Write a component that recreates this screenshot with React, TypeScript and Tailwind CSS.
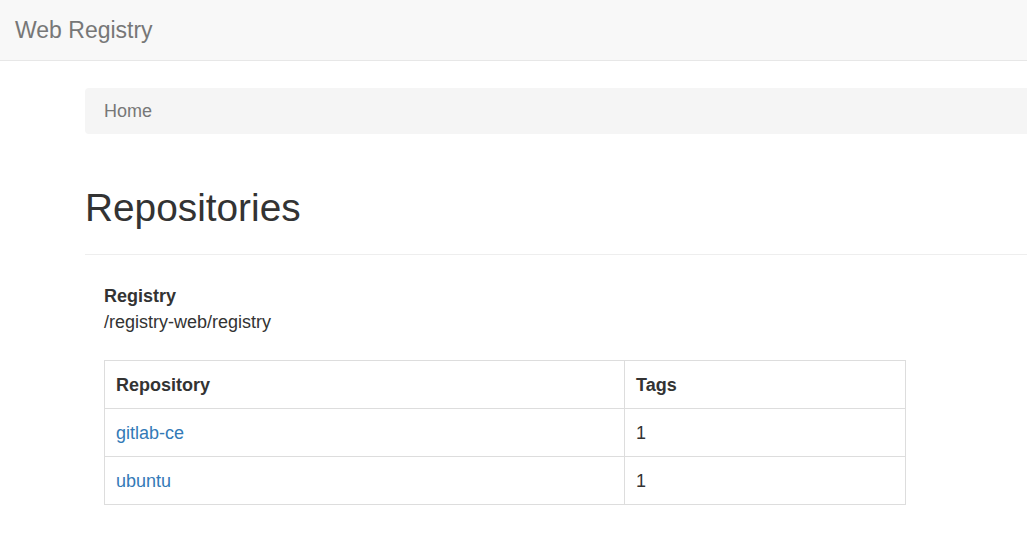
import React from "react";

const repos = [
  { name: "gitlab-ce", tags: 1 },
  { name: "ubuntu", tags: 1 },
];

export default function App() {
  return (
    <div
      className="min-h-[560px] w-[1027px] overflow-hidden bg-white text-[18px] leading-[26px] text-[#333]"
      style={{ fontFamily: '"Liberation Sans", Arial, sans-serif' }}
    >
      {/* Navbar */}
      <nav className="flex h-[61px] items-center border-b border-[#e7e7e7] bg-[#f8f8f8] px-[15px]">
        <span className="text-[23px] leading-[26px] text-[#777]">Web Registry</span>
      </nav>

      <div className="ml-[85px] w-[1170px]">
        {/* Breadcrumb */}
        <div className="mt-[27px] flex h-[46px] items-center rounded-[4px] bg-[#f5f5f5] px-[19px]">
          <span className="text-[#777]">Home</span>
        </div>

        {/* Page header */}
        <div className="mt-[53px] border-b border-[#eee] pb-[25px]">
          <h1 className="text-[38.8px] leading-[42px] text-[#333]">Repositories</h1>
        </div>

        <div className="px-[19px] pt-[28px]">
          <div className="font-bold">Registry</div>
          <div>/registry-web/registry</div>

          <table className="mt-[25px] w-[802px] border-collapse text-left">
            <thead>
              <tr className="h-[48px]">
                <th className="w-[520px] border border-[#ddd] px-[11px] font-bold">Repository</th>
                <th className="border border-[#ddd] px-[11px] font-bold">Tags</th>
              </tr>
            </thead>
            <tbody>
              {repos.map((r) => (
                <tr key={r.name} className="h-[48px]">
                  <td className="border border-[#ddd] px-[11px]">
                    <a href="#" className="text-[#337ab7]">
                      {r.name}
                    </a>
                  </td>
                  <td className="border border-[#ddd] px-[11px] text-[#333]">{r.tags}</td>
                </tr>
              ))}
            </tbody>
          </table>
        </div>
      </div>
    </div>
  );
}
